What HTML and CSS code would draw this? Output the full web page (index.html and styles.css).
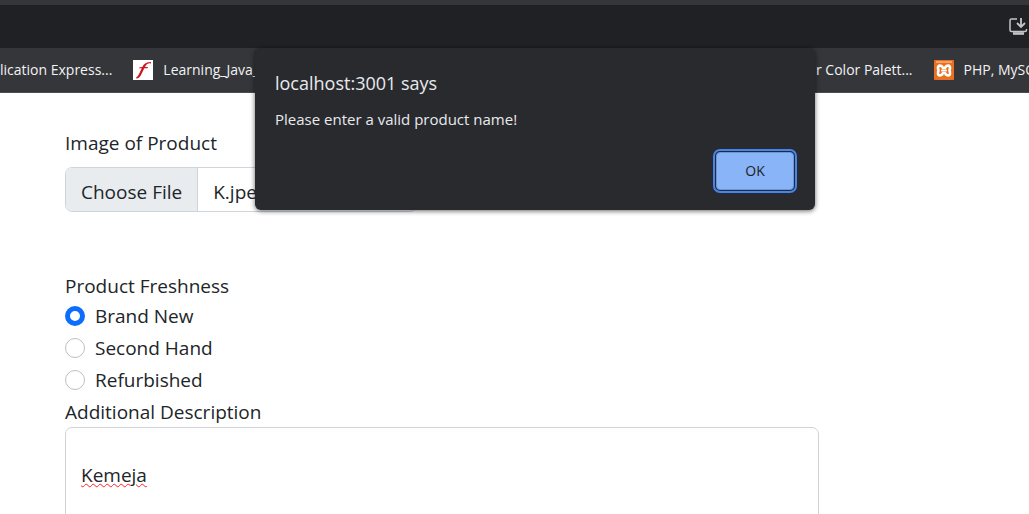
FILE: index.html
```html
<!DOCTYPE html>
<html lang="en">
<head>
<meta charset="utf-8">
<title>Product form</title>
<link rel="stylesheet" href="styles.css">
</head>
<body>
<header class="browser">
  <div class="toolbar">
    <button class="install" type="button" aria-label="Install app">
      <svg width="20" height="20" viewBox="0 0 20 20" fill="none" stroke="#c4c5c7" stroke-width="1.500">
        <path d="M9 2H3.500Q2 2 2 3.500V13Q2 14.500 3.500 14.500H17Q18.500 14.500 18.500 13V12"/>
        <path d="M13 1V10M9 6L13 10L17 6" stroke-width="1.800"/>
        <path d="M5 16.500H16" stroke-width="2.600"/>
      </svg>
    </button>
  </div>
  <nav class="bookmarks">
    <a class="bookmark" href="#">lication Express...</a>
    <a class="bookmark" href="#">
      <svg width="20" height="20" viewBox="0 0 20 20">
        <path fill="#fff" d="M0 0H20V20H0z"/>
        <path fill="#cc1720" d="M18 2V3.500Q14 2.500 12.500 6L12 7H15L14.500 8.300H11.300L8.500 14Q6.500 18.500 3 18.500L3.500 17Q5 16.500 6.500 13L8.700 8.300H5.500Q6.500 7 9.300 7Q11.500 2 18 2Z"/>
      </svg>
      Learning_Java_
    </a>
    <div class="bookmarks-end">
      <a class="bookmark" href="#">r Color Palett...</a>
      <a class="bookmark" href="#">
        <svg width="20" height="20" viewBox="0 0 20 20">
          <rect width="20" height="20" rx="1" fill="#e8701e"/>
          <path fill="#f4a26b" d="M2 1H18V3H2z"/>
          <g fill="none" stroke="#fff" stroke-width="2.600" stroke-linejoin="round" stroke-linecap="round">
            <path d="M9 8Q8 5.500 5.500 5.500Q3 6.500 4.500 10.500Q3 15 5.500 15.500Q8 15.500 9 13"/>
            <path d="M11 8Q12 5.500 14.500 5.500Q17 6.500 15.500 10.500Q17 15 14.500 15.500Q12 15.500 11 13"/>
            <path d="M9 8L11 8M9 13L11 13M8 10.500H12" stroke-width="2"/>
          </g>
        </svg>
        PHP, MySQL
      </a>
    </div>
  </nav>
</header>

<main class="page">
  <form class="form">
    <label class="label" for="image">Image of Product</label>
    <input class="file" type="file" id="image">
    <fieldset class="choices">
      <legend class="legend">Product Freshness</legend>
      <label class="choice"><input class="radio" type="radio" name="fresh" checked>Brand New</label>
      <label class="choice"><input class="radio" type="radio" name="fresh">Second Hand</label>
      <label class="choice"><input class="radio" type="radio" name="fresh">Refurbished</label>
    </fieldset>
    <label class="label" for="description">Additional Description</label>
    <textarea class="description" id="description" spellcheck="false">Kemeja</textarea>
  </form>
</main>

<div class="dialog" role="alertdialog" aria-labelledby="origin" aria-describedby="message">
  <h1 class="origin" id="origin">localhost:3001 says</h1>
  <p class="message" id="message">Please enter a valid product name!</p>
  <button class="ok" type="button">OK</button>
</div>
<script src="script.js"></script>
</body>
</html>
```
FILE: styles.css
```css
* { box-sizing: border-box; }

body {
  margin: 0;
  background: #fff;
  color: #212529;
  font-family: "Open Sans", "Noto Sans", sans-serif;
  font-size: 19px;
  line-height: 30px;
  height: 100vh;
  overflow: hidden;
}

.toolbar {
  display: flex;
  justify-content: flex-end;
  align-items: center;
  height: 48px;
  padding: 1px 1px 0 0;
  background: #202124;
  border-top: 5px solid #35363a;
}

.install {
  display: flex;
  padding: 0;
  border: 0;
  background: none;
}

.bookmarks {
  display: flex;
  align-items: center;
  gap: 21px;
  height: 45px;
  background: #35363a;
  border-bottom: 1px solid #4b4c50;
  font-size: 14px;
  white-space: nowrap;
  overflow: hidden;
}

.bookmark {
  display: flex;
  flex: none;
  align-items: center;
  gap: 10px;
  color: #f1f3f4;
  text-decoration: none;
}

.bookmarks-end {
  display: flex;
  flex: none;
  gap: 21px;
  width: 213px;
  margin-left: auto;
  overflow: hidden;
}

.form {
  display: flex;
  flex-direction: column;
  width: 754px;
  margin: 35px 0 0 65px;
}

.file {
  width: 352px;
  height: 45px;
  margin: 9px 0 59px;
  border: 1px solid #ced4da;
  border-radius: 7px;
  background: #fff;
  color: #212529;
  font: inherit;
  line-height: 43px;
  overflow: hidden;
}

.file::file-selector-button {
  height: 48px;
  margin: 0 15px 0 0;
  padding: 0 15px;
  border: 0;
  border-right: 1px solid #ced4da;
  background: #e9ecef;
  color: #212529;
  font: inherit;
}

.choices {
  margin: 0;
  padding: 0;
  border: 0;
}

.legend { padding: 0; }

.choice {
  display: flex;
  align-items: center;
  gap: 10px;
  height: 30px;
  margin-bottom: 2px;
}

.radio {
  appearance: none;
  width: 20px;
  height: 20px;
  margin: 0;
  border: 1px solid #bfbfbf;
  border-radius: 50%;
  background: #fff;
}

.radio:checked { border: 5px solid #0d6efd; }

.description {
  height: 160px;
  padding: 32px 15px;
  border: 1px solid #ced4da;
  border-radius: 7px;
  background: #fff;
  color: #212529;
  font: inherit;
  resize: none;
  text-decoration: underline wavy #f22 1px;
}

.dialog {
  position: absolute;
  top: 48px;
  left: 255px;
  width: 560px;
  display: flex;
  flex-direction: column;
  padding: 20px;
  border-radius: 6px;
  background: #292a2d;
  box-shadow: 0 1px 5px rgba(0, 0, 0, 0.6);
  color: #e8eaed;
}

.origin {
  margin: 0 0 8px;
  font-size: 18px;
  font-weight: 400;
  line-height: 30px;
}

.message {
  margin: 0 0 20px;
  font-size: 15px;
  line-height: 26px;
}

.ok {
  align-self: flex-end;
  width: 78px;
  height: 38px;
  margin-right: 1px;
  border: 1px solid #6f95d2;
  border-radius: 4px;
  outline: 2px solid #4285f4;
  outline-offset: 1px;
  background: #8ab4f8;
  color: #202124;
  font: inherit;
  font-size: 14px;
}
```
FILE: script.js
```js
const transfer = new DataTransfer();
transfer.items.add(new File([""], "K.jpeg", { type: "image/jpeg" }));
document.getElementById("image").files = transfer.files;
```
